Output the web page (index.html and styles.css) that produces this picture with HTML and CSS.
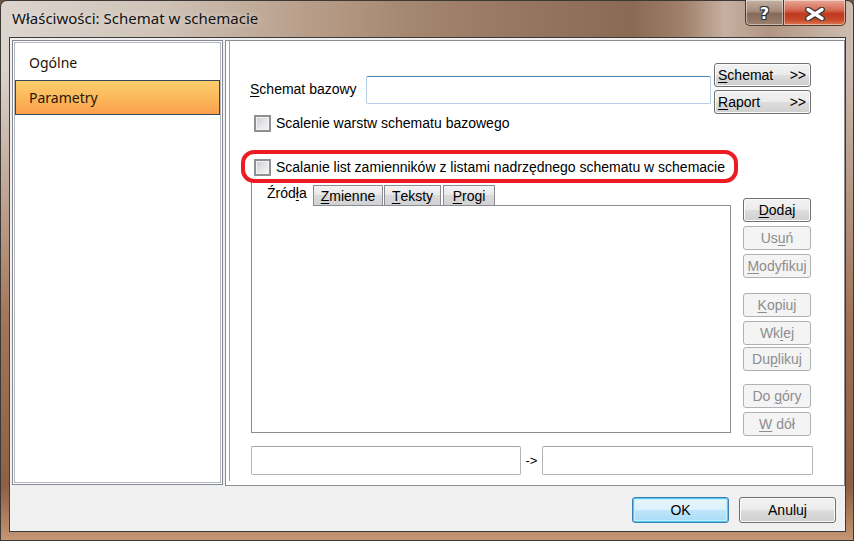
FILE: index.html
```html
<!DOCTYPE html>
<html lang="pl">
<head>
    <meta charset="UTF-8">
    <title>Właściwości: Schemat w schemacie</title>
    <link rel="stylesheet" href="styles.css">
</head>
<body>
    <div class="window">
        <div class="titlebar">
            <span class="title">Właściwości: Schemat w schemacie</span>
            <div class="caption-btns">
                <div class="cap-btn help">?</div>
                <div class="cap-btn close">
                    <svg width="22" height="14" viewBox="0 0 22 14">
                        <path d="M4 2.5 L18 11.5 M18 2.5 L4 11.5" stroke="#3a3a3a" stroke-width="6" stroke-linecap="round"/>
                        <path d="M4 2.5 L18 11.5 M18 2.5 L4 11.5" stroke="#ffffff" stroke-width="3.4" stroke-linecap="round"/>
                    </svg>
                </div>
            </div>
        </div>

        <div class="client">
            <div class="main">
                <ul class="nav">
                    <li>Ogólne</li>
                    <li class="active">Parametry</li>
                </ul>

                <div class="panel">
                    <div class="pane">
                        <div class="base-row">
                            <label class="base-label"><u>S</u>chemat bazowy</label>
                            <div class="textbox focus"></div>
                            <div class="menu-btns">
                                <button class="btn menu"><span><u>S</u>chemat</span><span>&gt;&gt;</span></button>
                                <button class="btn menu"><span><u>R</u>aport</span><span>&gt;&gt;</span></button>
                            </div>
                        </div>

                        <div class="check first"><span class="box"></span>Scalenie warstw schematu bazowego</div>
                        <div class="check second">
                            <span class="box"></span>Scalanie list zamienników z listami nadrzędnego schematu w schemacie
                            <span class="marker"></span>
                        </div>

                        <div class="tabs-area">
                            <div class="tabs-col">
                                <div class="tabstrip">
                                    <div class="tab active">Źród<u>ł</u>a</div>
                                    <div class="tab w-zm"><u>Z</u>mienne</div>
                                    <div class="tab w-te"><u>T</u>eksty</div>
                                    <div class="tab w-pr"><u>P</u>rogi</div>
                                </div>
                                <div class="tabpage"></div>
                            </div>
                            <div class="side-btns">
                                <button class="btn side"><u>D</u>odaj</button>
                                <button class="btn side off">Us<u>u</u>ń</button>
                                <button class="btn side off"><u>M</u>odyfikuj</button>
                                <button class="btn side off group"><u>K</u>opiuj</button>
                                <button class="btn side off">Wk<u>l</u>ej</button>
                                <button class="btn side off tight">Du<u>p</u>likuj</button>
                                <button class="btn side off group2">Do <u>g</u>óry</button>
                                <button class="btn side off"><u>W</u> dół</button>
                            </div>
                        </div>

                        <div class="mapping">
                            <div class="field left"></div>
                            <span class="arrow">-&gt;</span>
                            <div class="field right"></div>
                        </div>
                    </div>
                </div>
            </div>

            <div class="footer">
                <button class="btn dlg default">OK</button>
                <button class="btn dlg">Anuluj</button>
            </div>
        </div>
    </div>
</body>
</html>
```

FILE: styles.css
```css
* {
    margin: 0;
    padding: 0;
    box-sizing: border-box;
}

body {
    width: 854px;
    height: 541px;
    overflow: hidden;
    font-family: 'Liberation Sans', Arial, sans-serif;
    font-size: 14px;
    color: #000;
    background: #6b5444;
}

u {
    text-decoration: underline;
    text-underline-offset: 2px;
}

/* okno */
.window {
    width: 854px;
    height: 541px;
    display: flex;
    flex-direction: column;
    border: 1px solid #3c3835;
    border-radius: 7px 7px 0 0;
    background:
        linear-gradient(to bottom, rgba(0, 0, 0, 0) 0%, rgba(0, 0, 0, 0) 12%, rgba(150, 100, 68, 0.85) 60%, rgba(138, 90, 60, 0.95) 90%, rgba(196, 150, 116, 1) 100%),
        linear-gradient(90deg, #dcd5ce 0%, #d0c4b9 18%, #b89e89 36%, #a2836b 50%, #967560 62%, #8a6a53 74%, #a08069 80%, #c6b0a1 85%, #b29683 90%, #cdbcb0 100%);
}

.titlebar {
    height: 36px;
    display: flex;
    justify-content: space-between;
    align-items: flex-start;
}

.title {
    font-family: 'Noto Sans', 'Open Sans', sans-serif;
    font-size: 15px;
    color: #111;
    padding: 7px 0 0 11px;
    text-shadow: 0 0 6px rgba(255, 255, 255, 0.6);
}

.caption-btns {
    display: flex;
    margin: -2px 7px 0 0;
}

.cap-btn {
    height: 27px;
    display: flex;
    align-items: center;
    justify-content: center;
    border: 1px solid #4a3a30;
    box-shadow: inset 0 0 0 1px rgba(255, 255, 255, 0.45);
}

.help {
    width: 38px;
    border-right: none;
    border-radius: 0 0 0 5px;
    background: linear-gradient(#c3b2a6 0%, #a68c7a 45%, #87695a 55%, #9c806e 100%);
    font-family: 'DejaVu Sans', sans-serif;
    font-weight: bold;
    font-size: 16px;
    color: #fff;
    padding-top: 2px;
    text-shadow: 0 0 1px #222, 1px 1px 0 #333, -1px -1px 0 #333, 1px -1px 0 #333, -1px 1px 0 #333;
}

.close {
    width: 63px;
    border-radius: 0 0 5px 0;
    background: linear-gradient(#e8aa98 0%, #d66a52 40%, #c0391e 55%, #c84a2a 80%, #df7a52 100%);
    padding-top: 2px;
}

/* obszar klienta */
.client {
    margin: 0 7px 0 8px;
    height: 495px;
    border: 1px solid #3b3b3b;
    background: #f0f0f0;
    display: flex;
    flex-direction: column;
}

.main {
    display: flex;
    height: 448px;
}

.nav {
    list-style: none;
    margin: 2px 0 0 2px;
    width: 211px;
    height: 445px;
    background: #fff;
    border: 1px solid #838791;
    box-shadow: inset 0 0 0 1px #fff, inset 0 0 0 2px #b4b7be;
    padding: 4px 2px;
    font-family: 'Noto Sans', 'Open Sans', sans-serif;
    font-size: 14px;
    color: #1c1208;
}

.nav li {
    height: 35px;
    display: flex;
    align-items: center;
    padding-left: 13px;
    border: 1px solid transparent;
}

.nav li.active {
    background: linear-gradient(#fdcd6c 0%, #fcb95c 50%, #fb9f4b 100%);
    border-color: #34465a;
    color: #2a170a;
}

.panel {
    margin: 2px 0 0 2px;
    flex: 1;
    height: 446px;
    border: 1px solid #898c95;
    background: #fff;
    display: flex;
}

.pane {
    flex: 1;
    margin-left: 3px;
    height: 440px;
    border-left: 1px solid #9d9fa6;
    padding: 22px 0 0 20px;
    display: flex;
    flex-direction: column;
}

.base-row {
    display: flex;
    align-items: center;
}

.base-label {
    width: 116px;
}

.textbox {
    width: 345px;
    height: 28px;
    margin-top: 2px;
    border: 1px solid #b5cfe7;
    border-top-color: #4d86b6;
    border-radius: 2px;
    background: #fff;
}

.menu-btns {
    margin-left: 3px;
    width: 97px;
    display: flex;
    flex-direction: column;
    gap: 3px;
}

/* przyciski */
.btn {
    font-family: 'Liberation Sans', Arial, sans-serif;
    font-size: 14px;
    color: #000;
    border: 1px solid #707070;
    border-radius: 3px;
    background: linear-gradient(#f2f2f2 0%, #ebebeb 50%, #dddddd 50%, #cfcfcf 100%);
    box-shadow: inset 0 0 0 1px #fbfbfb;
}

.btn.menu {
    height: 24px;
    display: flex;
    justify-content: space-between;
    align-items: center;
    padding: 0 4px 0 3px;
}

.btn.side {
    height: 24px;
    margin-top: 4px;
}

.btn.side:first-child {
    margin-top: 0;
}

.btn.off {
    color: #8d8d8d;
    border-color: #adb2b5;
    background: #f4f4f4;
    box-shadow: none;
}

.btn.group {
    margin-top: 15px;
}

.btn.tight {
    margin-top: 2px;
}

.btn.group2 {
    margin-top: 13px;
}

.btn.dlg {
    width: 97px;
    height: 26px;
}

.btn.default {
    border-color: #3c7fb1;
    background: linear-gradient(#e8f5fc 0%, #dbf1fc 50%, #bee6fd 50%, #a9dbf6 100%);
    box-shadow: inset 0 0 0 1px #4fcbf4, inset 0 0 0 2px #c6eefc;
}

/* pola wyboru */
.check {
    display: flex;
    align-items: center;
    gap: 5px;
    height: 18px;
    margin-left: 4px;
    position: relative;
}

.check.second {
    margin-top: 26px;
}

.box {
    width: 17px;
    height: 17px;
    border: 2px solid #8e9091;
    background: linear-gradient(135deg, #c9ccd1 0%, #e6e7e9 55%, #f6f6f6 100%);
    box-shadow: inset 0 0 0 1px #f2f2f2;
}

.marker {
    position: absolute;
    left: -13px;
    top: -8px;
    width: 497px;
    height: 33px;
    border: 4px solid #ed1c24;
    border-radius: 13px;
    z-index: 3;
}

/* zakładki */
.tabs-area {
    display: flex;
    margin: 5px 0 0 1px;
}

.tabs-col {
    width: 480px;
}

.tabstrip {
    height: 24px;
    display: flex;
    align-items: flex-end;
    position: relative;
    z-index: 1;
}

.tab {
    height: 20px;
    border: 1px solid #898c95;
    border-bottom: none;
    background: linear-gradient(#f4f4f4 0%, #e8e8e8 50%, #dadada 50%, #d2d2d2 100%);
    display: flex;
    align-items: center;
    justify-content: center;
    padding-top: 1px;
}

.tab.active {
    width: 62px;
    height: 25px;
    margin-bottom: -1px;
    background: #fff;
    border-right: none;
    align-items: flex-start;
    justify-content: flex-start;
    padding: 3px 0 0 15px;
}

.w-zm {
    width: 70px;
}

.w-te {
    width: 57px;
    margin-left: 1px;
}

.w-pr {
    width: 52px;
    margin-left: 2px;
}

.tabpage {
    height: 228px;
    border: 1px solid #898c95;
    background: #fff;
}

.side-btns {
    margin-left: 12px;
    width: 68px;
    padding-top: 17px;
    display: flex;
    flex-direction: column;
}

/* mapowanie */
.mapping {
    display: flex;
    align-items: center;
    margin: 10px 0 0 1px;
}

.field {
    height: 29px;
    border: 1px solid #b4b4b4;
    border-top-color: #a4a4a4;
    border-radius: 2px;
    background: #fff;
}

.field.left {
    width: 270px;
}

.field.right {
    width: 271px;
}

.arrow {
    width: 21px;
    text-align: center;
    font-size: 13px;
}

/* stopka */
.footer {
    flex: 1;
    display: flex;
    justify-content: flex-end;
    gap: 10px;
    padding: 11px 9px 0 0;
}
```
